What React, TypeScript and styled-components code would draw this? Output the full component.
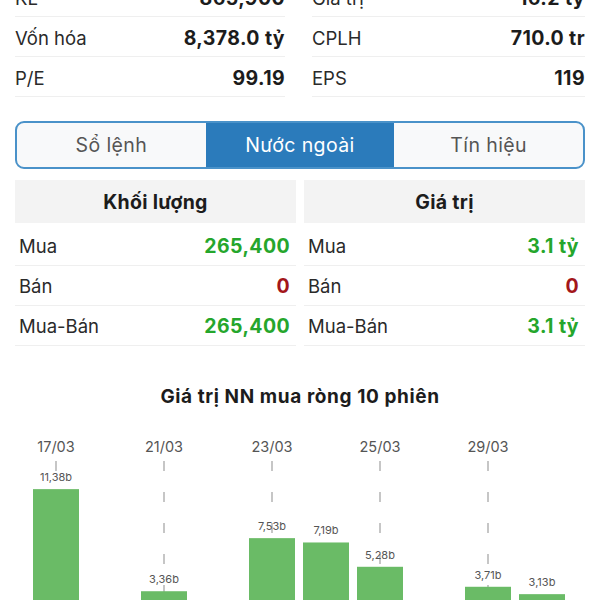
import styled, {createGlobalStyle} from 'styled-components';

const GlobalStyle = createGlobalStyle`
	body {
		margin: 0;
		background: #fff;
		font-family: Inter, "Noto Sans", sans-serif;
		color: #222;
		overflow: hidden;
	}
`;

type Stat = {label: string; value: string};
type Flow = {label: string; value: string; tone: 'up' | 'down'};
type Bar = {value: number | null; date?: string};

const leftStats: Stat[] = [
	{label: 'KL', value: '865,900'},
	{label: 'Vốn hóa', value: '8,378.0 tỷ'},
	{label: 'P/E', value: '99.19'},
];

const rightStats: Stat[] = [
	{label: 'Giá trị', value: '16.2 tỷ'},
	{label: 'CPLH', value: '710.0 tr'},
	{label: 'EPS', value: '119'},
];

const tabs = ['Sổ lệnh', 'Nước ngoài', 'Tín hiệu'];

const volume: Flow[] = [
	{label: 'Mua', value: '265,400', tone: 'up'},
	{label: 'Bán', value: '0', tone: 'down'},
	{label: 'Mua-Bán', value: '265,400', tone: 'up'},
];

const amount: Flow[] = [
	{label: 'Mua', value: '3.1 tỷ', tone: 'up'},
	{label: 'Bán', value: '0', tone: 'down'},
	{label: 'Mua-Bán', value: '3.1 tỷ', tone: 'up'},
];

const bars: Bar[] = [
	{value: 11.38, date: '17/03'},
	{value: null},
	{value: 3.36, date: '21/03'},
	{value: null},
	{value: 7.53, date: '23/03'},
	{value: 7.19},
	{value: 5.28, date: '25/03'},
	{value: null},
	{value: 3.71, date: '29/03'},
	{value: 3.13},
];

// chart geometry, in svg units (svg starts at page x 15)
const SLOT = 54;
const FIRST = 41;
const BAR_W = 46;
const BASE = 213;
const SCALE = 12.73;

function BarChart() {
	return (
		<ChartSvg width={570} height={220}>
			{bars.map((b, i) => {
				const cx = FIRST + SLOT * i;
				return b.date ? (
					<g key={'d' + i}>
						<text x={cx} y={31} textAnchor="middle" fontSize={14.5} fill="#555">
							{b.date}
						</text>
						<line
							x1={cx}
							x2={cx}
							y1={40}
							y2={BASE}
							stroke="#b4b4b4"
							strokeWidth={1.5}
							strokeDasharray="10 21"
						/>
					</g>
				) : null;
			})}
			{bars.map((b, i) => {
				if (b.value === null) return null;
				const cx = FIRST + SLOT * i;
				const top = BASE - b.value * SCALE;
				return (
					<g key={'b' + i}>
						<rect x={cx - BAR_W / 2} y={top} width={BAR_W} height={BASE - top} fill="#6abb66" />
						<text x={cx} y={top - 8} textAnchor="middle" fontSize={11} fill="#555">
							{b.value.toFixed(2).replace('.', ',')}b
						</text>
					</g>
				);
			})}
		</ChartSvg>
	);
}

function FlowTable({title, rows}: {title: string; rows: Flow[]}) {
	return (
		<FlowColumn>
			<FlowHeader>{title}</FlowHeader>
			<FlowBody>
				{rows.map(r => (
					<Row key={r.label}>
						<Label>{r.label}</Label>
						<FlowValue $tone={r.tone}>{r.value}</FlowValue>
					</Row>
				))}
			</FlowBody>
		</FlowColumn>
	);
}

export default function App() {
	return (
		<>
			<GlobalStyle />
			<Page>
				<StatsGrid>
					{[leftStats, rightStats].map((col, ci) => (
						<StatsColumn key={ci}>
							{col.map(s => (
								<StatRow key={s.label}>
									<Label>{s.label}</Label>
									<StatValue>{s.value}</StatValue>
								</StatRow>
							))}
						</StatsColumn>
					))}
				</StatsGrid>

				<Segmented>
					{tabs.map((t, i) => (
						<Segment key={t} $active={i === 1}>
							{t}
						</Segment>
					))}
				</Segmented>

				<FlowGrid>
					<FlowTable title="Khối lượng" rows={volume} />
					<FlowTable title="Giá trị" rows={amount} />
				</FlowGrid>

				<ChartTitle>Giá trị NN mua ròng 10 phiên</ChartTitle>
				<BarChart />
			</Page>
		</>
	);
}

const Page = styled.div`
	padding: 0 15px;
	height: 600px;
	overflow: hidden;
`;

const StatsGrid = styled.div`
	display: grid;
	grid-template-columns: 270px 273px;
	justify-content: space-between;
	margin-top: -23px;
`;

const StatsColumn = styled.div`
	display: flex;
	flex-direction: column;
`;

const Row = styled.div`
	display: flex;
	align-items: center;
	justify-content: space-between;
	height: 40px;
	border-bottom: 1px solid #efefef;
	box-sizing: border-box;
	font-size: 18.5px;
`;

const StatRow = styled(Row)`
	padding-top: 3px;
`;

const Label = styled.span`
	color: #2a2a2a;
`;

const StatValue = styled.span`
	font-size: 19.5px;
	letter-spacing: 0.4px;
	font-weight: 700;
	color: #1c1c1c;
`;

const Segmented = styled.div`
	display: grid;
	grid-template-columns: repeat(3, 1fr);
	margin-top: 24px;
	height: 48px;
	border: 2px solid #4a92c9;
	border-radius: 9px;
	overflow: hidden;
	box-sizing: border-box;
	background: #f8f9fa;
`;

const Segment = styled.div<{$active: boolean}>`
	display: flex;
	align-items: center;
	justify-content: center;
	font-size: 19.5px;
	letter-spacing: 0.4px;
	color: ${p => (p.$active ? '#fff' : '#555')};
	background: ${p => (p.$active ? '#2b7bbb' : 'transparent')};
`;

const FlowGrid = styled.div`
	display: grid;
	grid-template-columns: 1fr 1fr;
	gap: 8px;
	margin-top: 11px;
`;

const FlowColumn = styled.div`
	display: flex;
	flex-direction: column;
`;

const FlowHeader = styled.div`
	height: 43px;
	display: flex;
	align-items: center;
	justify-content: center;
	background: #f3f3f3;
	font-size: 19.5px;
	letter-spacing: 0.3px;
	font-weight: 700;
	color: #1c1c1c;
`;

const FlowBody = styled.div`
	padding: 3px 6px 0 4px;

	& > div {
		margin: 0 -6px 0 -4px;
		padding: 0 6px 0 4px;
	}
`;

const FlowValue = styled.span<{$tone: 'up' | 'down'}>`
	font-size: 19.5px;
	letter-spacing: 0.4px;
	font-weight: 700;
	color: ${p => (p.$tone === 'up' ? '#25a62c' : '#a3161a')};
`;

const ChartTitle = styled.div`
	margin-top: 39px;
	text-align: center;
	font-size: 19px;
	letter-spacing: 0.6px;
	font-weight: 700;
	color: #1c1c1c;
`;

const ChartSvg = styled.svg`
	display: block;
	margin-top: 13px;
	overflow: visible;
	font-family: Inter, "Noto Sans", sans-serif;
`;
